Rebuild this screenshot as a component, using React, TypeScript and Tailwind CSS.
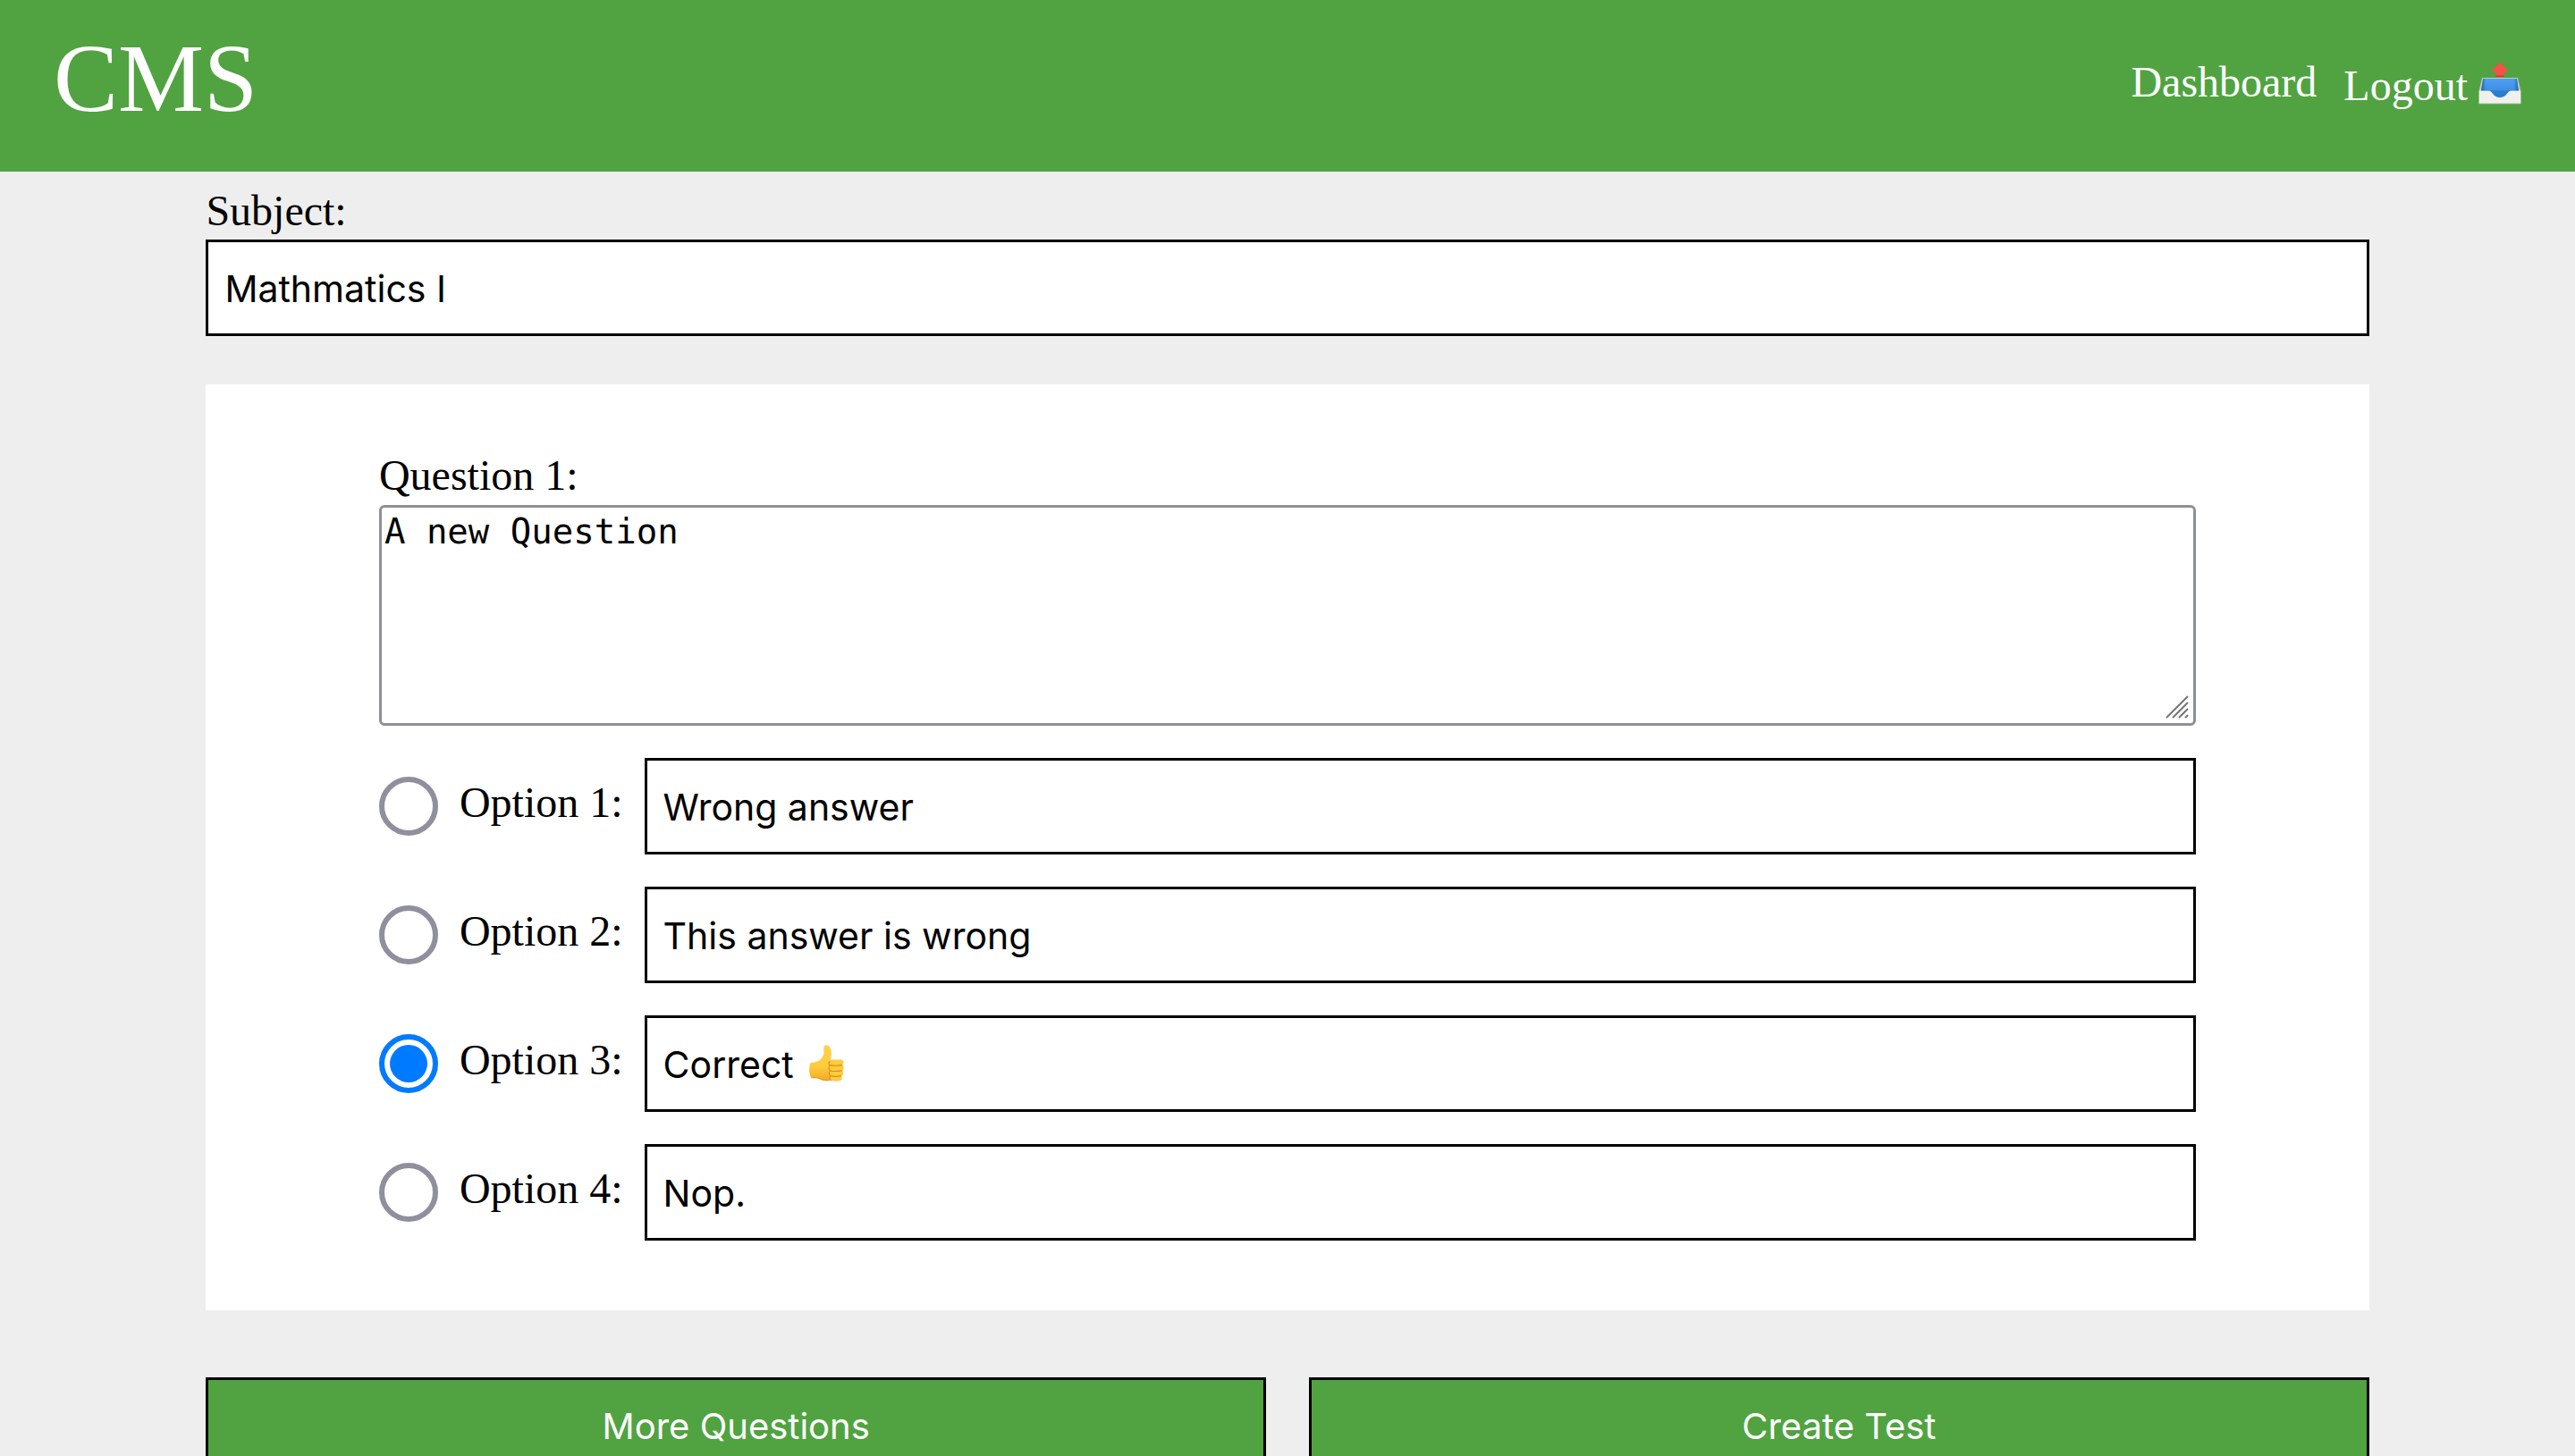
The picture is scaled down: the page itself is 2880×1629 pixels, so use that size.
import { useState } from "react";

const serif = "font-['Liberation_Serif','Times_New_Roman',serif]";
const field =
  "h-[108px] w-full min-w-0 border-3 border-black bg-white px-[18px] pt-0.5 font-['Inter',sans-serif] text-[41px] text-black";
const action =
  "h-[108px] flex-1 border-3 border-black bg-[#51a341] pt-0.5 font-['Inter',sans-serif] text-[40px] text-white";

function OutboxIcon() {
  return (
    <svg viewBox="0 0 48 48" className="mb-1.5 size-12" role="img" aria-label="Outbox tray">
      <defs>
        <linearGradient id="tray" x1="0" y1="0" x2="0" y2="1">
          <stop offset="0" stopColor="#4f9ff2" />
          <stop offset="0.55" stopColor="#3f8fe2" />
          <stop offset="0.6" stopColor="#2a80d2" />
          <stop offset="1" stopColor="#2679c8" />
        </linearGradient>
        <linearGradient id="side" x1="0" y1="0" x2="1" y2="0">
          <stop offset="0" stopColor="#1d5fa5" />
          <stop offset="0.12" stopColor="#1d5fa5" stopOpacity="0" />
          <stop offset="0.88" stopColor="#1d5fa5" stopOpacity="0" />
          <stop offset="1" stopColor="#1d5fa5" />
        </linearGradient>
      </defs>
      <path d="M4 18h40l3.4 15H.6z" fill="#c9c8c2" />
      <path d="M5 19h38l2 14.5L24 42 3 33.500z" fill="url(#tray)" />
      <path d="M5 19h38l2 14.500H3z" fill="url(#side)" />
      <path d="M24 .8l9.300 9.400c.5.600.2 1.200-.6 1.200h-3.900V17H19.200v-5.600h-3.900c-.8 0-1.100-.6-.6-1.200z" fill="#fb4f4a" />
      <path d="M19.200 15.600h9.600V17h-9.600z" fill="#d23b32" />
      <path d="M.6 33.400c0-.5.300-.8.8-.8h9.800c2 0 3.100 1.200 4.700 3.200C18.400 38.800 20.600 40 24 40s5.600-1.200 8.100-4.200c1.600-2 2.700-3.200 4.700-3.200h9.800c.5 0 .8.300.8.800V47H.6z" fill="#f0f0ee" />
      <path d="M.6 46h46.800v1.300H.6z" fill="#d6d5cf" />
    </svg>
  );
}

function ThumbsUpIcon() {
  return (
    <svg viewBox="0 0 40 44" className="h-11 w-10" role="img" aria-label="Thumbs up">
      <defs>
        <linearGradient id="skin" x1="0" y1="0" x2="0" y2="1">
          <stop offset="0" stopColor="#ffd04a" />
          <stop offset="0.6" stopColor="#ffcb3f" />
          <stop offset="1" stopColor="#f3ac22" />
        </linearGradient>
      </defs>
      <path
        d="M1.500 24c0-2.200 1-3.200 3.200-3.200 4.500-.2 7.200-1.300 9.600-4.200 2.800-3.300 3.600-5.200 3.100-8.600C17 4.200 17.600 1.200 20 1.200c3.600 0 5.900 4 5.900 9 0 2.700-.5 4.800-.9 7.200l-.6 22.600c-3.900 1.700-8.200.9-12.200-1.300-3-1.500-5.200-.3-7.800-.6C1.500 37.600.4 29.400 1.500 24z"
        fill="url(#skin)"
      />
      <path d="M23.500 19.500c.8-1.700 2.600-2.100 5-2.100h7c3 0 4 1.600 4 3.300 0 1.500-.8 2.500-1.700 2.900 1.200.4 2 1.500 2 3.100 0 1.800-.9 2.800-2.100 3.200 1 .5 1.500 1.400 1.500 2.800 0 1.700-1 2.700-2.400 3 .7.500 1 1.200 1 2.300 0 2.300-1.600 3.400-4.200 3.600-3.600.4-7.200 0-10.600-1.500z" fill="#ffcb40" />
      <path
        d="M24.800 23.700c3.800.7 8.800.7 12.900-.1M24.800 30c4 .7 8.800.6 12.800-.1M24.800 35.700c3.800.8 8 .7 11.700 0M23.800 19.600c-1.200 1.700-1.200 3.300.4 4.200M24.200 24c-1.600 2-1.400 4.600.3 6M24.400 30.200c-1.400 1.900-1.100 4.200.4 5.500M24.600 36c-1 1.500-.8 3.600.6 4.600"
        fill="none"
        stroke="#d98c17"
        strokeWidth="1.200"
        strokeLinecap="round"
      />
      <path d="M3.500 37.500c3.400.7 5.200-.9 8.700.9 3.800 2 7.600 3 11.600 1.800" fill="none" stroke="#e39a1c" strokeWidth="1.200" />
    </svg>
  );
}

const options = [
  { text: "Wrong answer" },
  { text: "This answer is wrong" },
  { text: "Correct ", thumb: true },
  { text: "Nop." },
];

export default function App() {
  const [correct, setCorrect] = useState(2);
  return (
    <div className={`min-h-screen bg-[#eeeeee] text-[48px] leading-[56px] text-black ${serif}`}>
      <header className="flex items-center justify-between bg-[#51a341] px-[60px] pt-[26px] pb-[42px] text-white">
        <a href="#" className="text-[108px] leading-[124px]">
          CMS
        </a>
        <nav className="flex items-center gap-[30px] pt-2">
          <a href="#dashboard">Dashboard</a>
          <a href="#logout" className="flex items-center gap-3 pt-2">
            Logout
            <OutboxIcon />
          </a>
        </nav>
      </header>

      <main className="mx-[8%] pt-4 pb-12">
        <div className="flex flex-col gap-1">
          <label htmlFor="subject">Subject:</label>
          <input id="subject" type="text" defaultValue="Mathmatics I" className={field} />
        </div>

        <section className="mt-[54px] bg-white px-[8%] pt-[74px] pb-[78px]">
          <label htmlFor="question" className="block">
            Question 1:
          </label>
          <div className="relative mt-[5px]">
            <textarea
              id="question"
              defaultValue="A new Question"
              className="block h-[247px] w-full resize-none rounded-md border-3 border-[#8f8f9d] bg-white px-[3px] py-1 font-['DejaVu_Sans_Mono',monospace] text-[39px] leading-[45px] text-black"
            />
            <svg
              viewBox="0 0 26 26"
              className="pointer-events-none absolute right-2 bottom-2 size-[26px]"
              fill="none"
              stroke="#757575"
              strokeWidth="2"
              aria-hidden="true"
            >
              <path d="M1 25L25 1M8 25L25 8M15 25L25 15M22 25L25 22" />
            </svg>
          </div>

          <div className="mt-9 flex flex-col gap-9">
            {options.map((option, i) => (
              <div key={option.text} className="flex items-center gap-6">
                <input
                  type="radio"
                  name="correct"
                  aria-label={`Option ${i + 1} is correct`}
                  checked={correct === i}
                  onChange={() => setCorrect(i)}
                  className="size-[66px] shrink-0 appearance-none rounded-full border-6 border-[#8f8f9d] bg-white bg-clip-content p-1.5 checked:border-[#007aff] checked:bg-[#007aff]"
                />
                <label htmlFor={`option-${i}`} className="shrink-0 pb-2">
                  Option {i + 1}:
                </label>
                <div className="relative flex-1">
                  <input id={`option-${i}`} type="text" defaultValue={option.text} className={field} />
                  {option.thumb && (
                    <span className="pointer-events-none absolute top-8 left-[183px]">
                      <ThumbsUpIcon />
                    </span>
                  )}
                </div>
              </div>
            ))}
          </div>
        </section>

        <div className="mt-[75px] flex gap-12">
          <button type="button" className={action}>
            More Questions
          </button>
          <button type="button" className={action}>
            Create Test
          </button>
        </div>
      </main>
    </div>
  );
}
